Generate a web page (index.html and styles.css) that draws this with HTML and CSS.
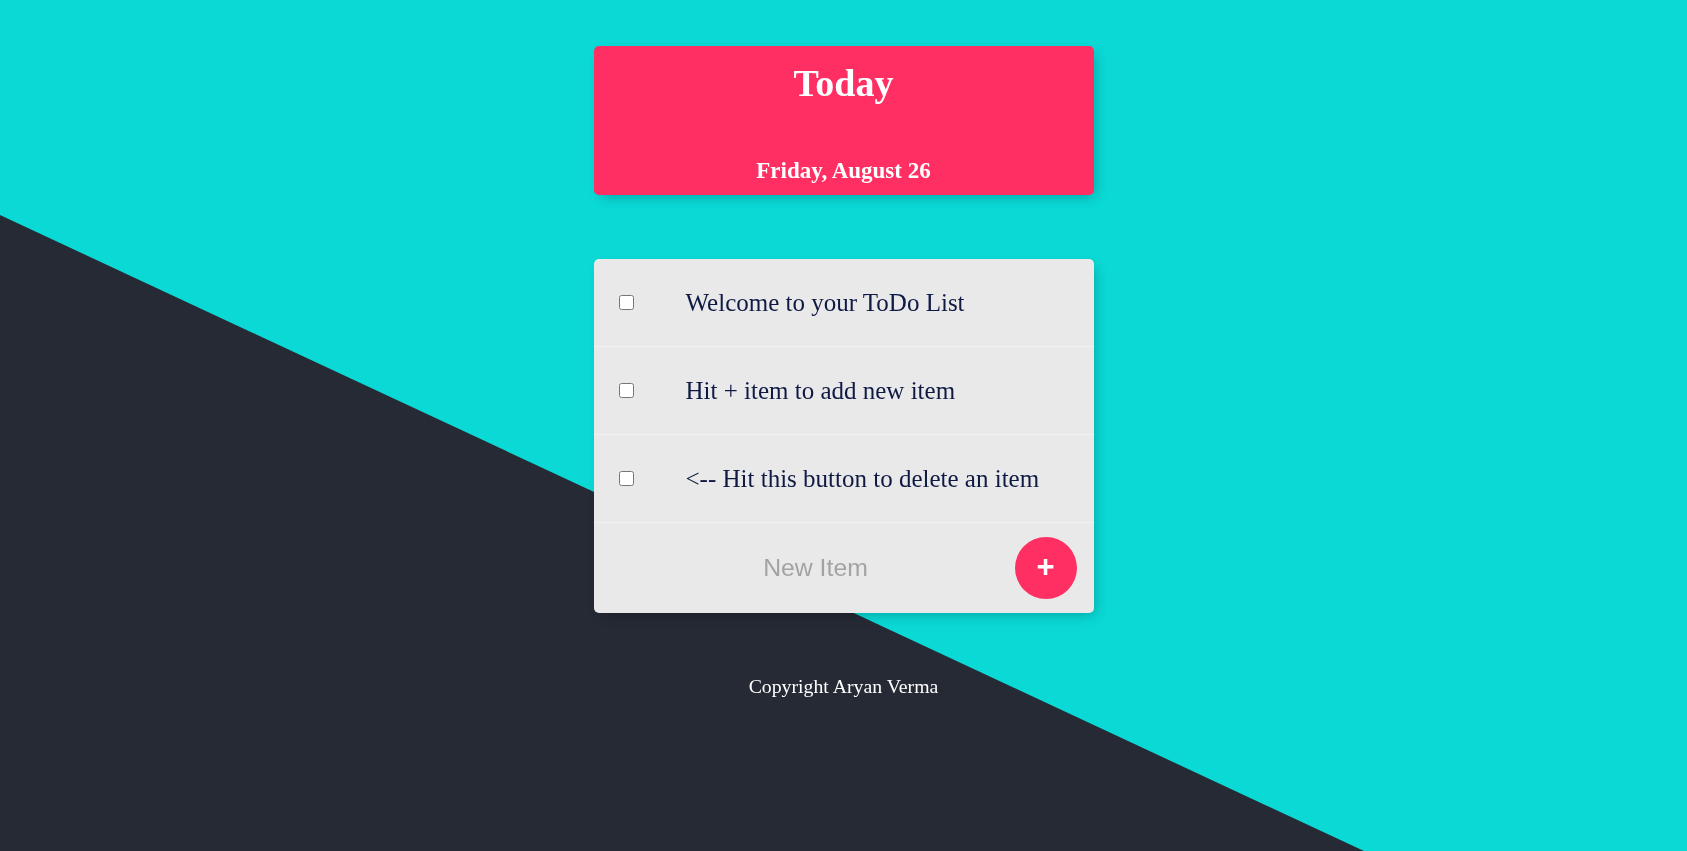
FILE: index.html
```html
<!DOCTYPE html>
<html lang="en">
<head>
<meta charset="utf-8">
<title>ToDo List</title>
<link rel="stylesheet" href="styles.css">
</head>
<body>
<div class="backdrop"></div>
<main class="page">
  <header class="heading-box">
    <h1 class="heading-title">Today</h1>
    <h2 class="heading-date">Friday, August 26</h2>
  </header>

  <section class="list-box">
    <div class="item">
      <input type="checkbox" class="item-check">
      <p class="item-text">Welcome to your ToDo List</p>
    </div>
    <div class="item">
      <input type="checkbox" class="item-check">
      <p class="item-text">Hit + item to add new item</p>
    </div>
    <div class="item">
      <input type="checkbox" class="item-check">
      <p class="item-text">&lt;-- Hit this button to delete an item</p>
    </div>
    <form class="item-form" onsubmit="return false;">
      <input type="text" class="new-input" placeholder="New Item" autocomplete="off">
      <button type="submit" class="add-btn">+</button>
    </form>
  </section>

  <footer class="footer">Copyright Aryan Verma</footer>
</main>
</body>
</html>
```

FILE: styles.css
```css
html, body {
  margin: 0;
  padding: 0;
  height: 100%;
}

body {
  background: #0ad9d6;
  font-family: "Liberation Serif", "Times New Roman", serif;
  overflow: hidden;
}

.backdrop {
  position: fixed;
  inset: 0;
  background: #262a35;
  clip-path: polygon(0 215px, 1364px 100%, 0 100%);
  z-index: 0;
}

.page {
  position: relative;
  z-index: 1;
  display: flex;
  flex-direction: column;
  align-items: center;
  padding-top: 46px;
}

.heading-box {
  box-sizing: border-box;
  width: 500px;
  height: 149px;
  background: #ff2f63;
  border-radius: 5px;
  box-shadow: 4px 5px 14px -4px rgba(0, 0, 0, 0.28);
  display: flex;
  flex-direction: column;
  align-items: center;
  padding: 17px 0 11px;
  color: #ffffff;
}

.heading-title {
  margin: 0;
  font-size: 38px;
  line-height: 40px;
  font-weight: bold;
}

.heading-date {
  margin: auto 0 0;
  font-size: 23px;
  line-height: 26px;
  font-weight: bold;
}

.list-box {
  width: 500px;
  margin-top: 64px;
  background: #e9e9e9;
  border-radius: 5px;
  box-shadow: 4px 5px 14px -4px rgba(0, 0, 0, 0.28);
  display: flex;
  flex-direction: column;
}

.item {
  box-sizing: border-box;
  height: 88px;
  display: flex;
  align-items: center;
  border-bottom: 1px solid #f2f2f2;
}

.item-check {
  margin: 0 0 0 25px;
  width: 15px;
  height: 15px;
  flex: none;
}

.item-text {
  margin: 0 0 0 52px;
  font-size: 25px;
  color: #0f1a44;
}

.item-form {
  box-sizing: border-box;
  height: 90px;
  display: flex;
  align-items: center;
  padding: 0 17px 0 23px;
}

.new-input {
  flex: 1;
  min-width: 0;
  border: none;
  outline: none;
  background: transparent;
  text-align: center;
  font-family: "Liberation Sans", Arial, sans-serif;
  font-size: 24.8px;
  color: #333333;
  padding: 0;
}

.new-input::placeholder {
  color: #a3a3a3;
}

.add-btn {
  flex: none;
  width: 62px;
  height: 62px;
  border-radius: 50%;
  border: none;
  background: #ff2f63;
  color: #ffffff;
  font-family: "Liberation Sans", Arial, sans-serif;
  font-weight: bold;
  font-size: 31px;
  line-height: 1;
  padding: 0 0 4px;
  display: flex;
  align-items: center;
  justify-content: center;
}

.footer {
  margin-top: 62px;
  color: #ffffff;
  font-size: 19.8px;
  text-align: center;
}
```
